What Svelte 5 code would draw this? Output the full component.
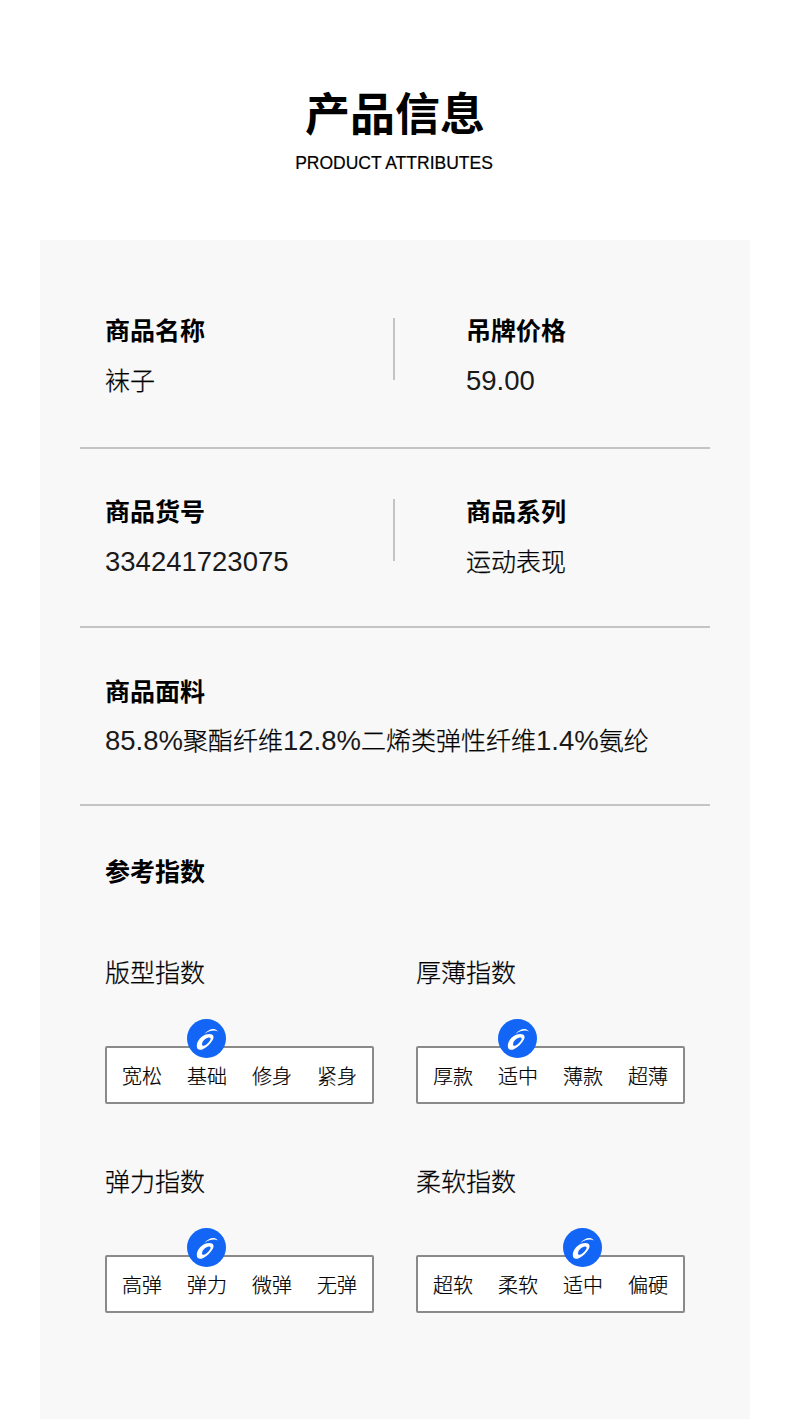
<script>
  const indexes = [
    { title: "版型指数", options: ["宽松", "基础", "修身", "紧身"], active: 1 },
    { title: "厚薄指数", options: ["厚款", "适中", "薄款", "超薄"], active: 1 },
    { title: "弹力指数", options: ["高弹", "弹力", "微弹", "无弹"], active: 1 },
    { title: "柔软指数", options: ["超软", "柔软", "适中", "偏硬"], active: 2 },
  ];

  // numbers sit a bit larger than the chinese text
  const fabric = [
    ["85.8%", true],
    ["聚酯纤维", false],
    ["12.8%", true],
    ["二烯类弹性纤维", false],
    ["1.4%", true],
    ["氨纶", false],
  ];
</script>

<div class="page">
  <header class="head">
    <h1>产品信息</h1>
    <p>PRODUCT ATTRIBUTES</p>
  </header>

  <section class="panel">
    <div class="row two">
      <div class="cell">
        <h3>商品名称</h3>
        <div class="val">袜子</div>
      </div>
      <div class="cell right">
        <h3>吊牌价格</h3>
        <div class="val"><span class="num">59.00</span></div>
      </div>
    </div>
    <div class="row two second">
      <div class="cell">
        <h3>商品货号</h3>
        <div class="val"><span class="num">334241723075</span></div>
      </div>
      <div class="cell right">
        <h3>商品系列</h3>
        <div class="val">运动表现</div>
      </div>
    </div>
    <div class="row fabric">
      <h3>商品面料</h3>
      <div class="val">
        {#each fabric as [text, isNum]}<span class:num={isNum}>{text}</span>{/each}
      </div>
    </div>
    <div class="refs">
      <h3>参考指数</h3>
      <div class="grid">
        {#each indexes as item}
          <div class="index">
            <div class="name">{item.title}</div>
            <div class="scale">
              {#each item.options as opt, i}
                <span class="opt">
                  {opt}
                  {#if i === item.active}
                    <svg class="badge" viewBox="0 0 39 39" aria-hidden="true">
                      <circle cx="19.5" cy="19.5" r="19.5" fill="#1366f5" />
                      <path
                        fill="#fff"
                        fill-rule="evenodd"
                        d="M9.800 27c0-3.500 2.200-7.500 5.700-9.800 3-2 7-2.900 9.500-1.700 1.800 1 2 3 .8 5.300-2 3.800-6 7.700-10 9.500-3.200 1.300-6 .3-6-3.300zM15 25.500c.1 1.400 1.300 1.600 2.700.9 2.300-1.100 4.600-3.300 5.600-5.400.8-1.700.2-2.700-1.500-2.500-2.200.2-4.500 1.800-5.800 3.800-.6 1-1 2.100-1 3.200z"
                      />
                      <path fill="#fff" d="M17.500 14.900c2.500-3.600 7.500-5.800 10.500-4.700 1.300.5 2.300 1.200 3 2.300-3.500-1.700-8-1.200-13.500 2.400z" />
                    </svg>
                  {/if}
                </span>
              {/each}
            </div>
          </div>
        {/each}
      </div>
    </div>
  </section>
</div>

<style>
  :global(body) {
    margin: 0;
    background: #fff;
  }
  .page {
    width: 790px;
    height: 1419px;
    overflow: hidden;
    font-family: "Liberation Sans", "Noto Sans CJK SC", sans-serif;
    color: #000;
  }
  .head {
    height: 240px;
    box-sizing: border-box;
    padding-top: 86px;
    text-align: center;
  }
  h1 {
    margin: 0;
    font-size: 45px;
    line-height: 60px;
    font-weight: 700;
  }
  .head p {
    margin: 5px 2px 0 0;
    font-size: 17.5px;
    line-height: 24px;
    -webkit-text-stroke: 0.2px #000;
  }
  .panel {
    margin: 0 40px;
    padding: 0 40px;
    height: 1179px;
    background: #f8f8f8;
  }
  h3 {
    margin: 0;
    font-size: 25px;
    line-height: 28px;
    font-weight: 700;
  }
  .val {
    height: 28px;
    margin-top: 21px;
    font-size: 25px;
    line-height: 28px;
    font-weight: 300;
    white-space: nowrap;
    -webkit-text-stroke: 0.25px #000;
  }
  .num {
    font-size: 27.5px;
    color: #1a1a1a;
    -webkit-text-stroke: 0;
  }
  .row {
    border-bottom: 2px solid #c4c4c4;
    box-sizing: border-box;
    padding-left: 25px;
  }
  .two {
    display: flex;
    height: 209px;
    padding-top: 78px;
  }
  .two.second {
    height: 179px;
    padding-top: 50px;
  }
  .cell {
    flex: none;
    box-sizing: border-box;
    width: 288px;
    height: 62px;
  }
  .cell h3 {
    margin-top: -1px;
  }
  .cell .val {
    margin-top: 22px;
  }
  .cell.right {
    width: 290px;
    padding-left: 71px;
    border-left: 2px solid #c4c4c4;
  }
  .fabric {
    height: 178px;
    padding-top: 50px;
  }
  .refs {
    padding: 52px 25px 0;
  }
  .grid {
    display: grid;
    grid-template-columns: 269px 269px;
    column-gap: 42px;
    row-gap: 61px;
    margin-top: 70px;
  }
  .name {
    font-size: 25px;
    line-height: 34px;
    font-weight: 300;
    -webkit-text-stroke: 0.25px #000;
  }
  .scale {
    display: flex;
    gap: 25px;
    box-sizing: border-box;
    height: 58px;
    margin-top: 56px;
    padding: 4px 14px 0 15px;
    align-items: center;
    background: #fff;
    border: 2px solid #8a8a8a;
    border-radius: 2px;
  }
  .opt {
    position: relative;
    flex: none;
    font-size: 20px;
    line-height: 28px;
    font-weight: 300;
    white-space: nowrap;
    -webkit-text-stroke: 0.2px #000;
  }
  .badge {
    position: absolute;
    left: 0;
    top: -44px;
    width: 39px;
    height: 39px;
    display: block;
  }
</style>
